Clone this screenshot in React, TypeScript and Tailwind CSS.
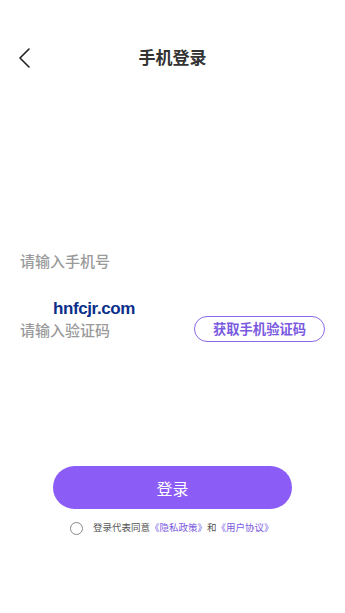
import React from "react";

export default function App() {
  return (
    <div className="w-[345px] h-[613px] bg-white flex flex-col" style={{ fontFamily: '"Noto Sans CJK SC", "Noto Sans", sans-serif' }}>
      <div className="mt-[34px] h-[44px] relative flex items-center justify-center">
        <svg className="absolute left-[17px] top-[13px]" width="16" height="22" viewBox="0 0 16 22" fill="none">
          <path d="M12 2 L3 11 L12 20" stroke="#222" strokeWidth="1.6" strokeLinecap="round" strokeLinejoin="round" />
        </svg>
        <span className="text-[17px] font-bold text-[#333] leading-none">手机登录</span>
      </div>
      <div className="mt-[170px] px-[20px] h-[24px] flex items-center">
        <span className="text-[15px] font-medium text-[#9a9a9a] leading-none">请输入手机号</span>
      </div>
      <div className="mt-[25px] pl-[53px] h-[22px] flex items-center">
        <span className="text-[17px] font-bold text-[#0a2f8a] leading-none tracking-[-0.4px]" style={{ fontFamily: '"Liberation Sans", sans-serif' }}>hnfcjr.com</span>
      </div>
      <div className="mt-[-3px] pl-[20px] pr-[20px] h-[26px] flex items-center justify-between">
        <span className="text-[15px] font-medium text-[#9a9a9a] leading-none">请输入验证码</span>
        <div className="w-[131px] h-[26px] rounded-full border border-[#8a6ae8] flex items-center justify-center">
          <span className="text-[13.3px] font-bold text-[#7a5ae0] leading-none">获取手机验证码</span>
        </div>
      </div>
      <div className="mt-[124px] px-[53px]">
        <div className="h-[43px] rounded-full bg-[#8b5cf6] flex items-center justify-center">
          <span className="text-[16px] text-white leading-none">登录</span>
        </div>
      </div>
      <div className="mt-[12px] pl-[70px] h-[14px] flex items-center">
        <span className="w-[13px] h-[13px] rounded-full border border-[#888] inline-block" />
        <span className="ml-[10px] text-[9.5px] text-[#555] leading-none">登录代表同意</span>
        <span className="text-[9.5px] text-[#7a5ae0] leading-none">《隐私政策》</span>
        <span className="text-[9.5px] text-[#555] leading-none">和</span>
        <span className="text-[9.5px] text-[#7a5ae0] leading-none">《用户协议》</span>
      </div>
    </div>
  );
}
